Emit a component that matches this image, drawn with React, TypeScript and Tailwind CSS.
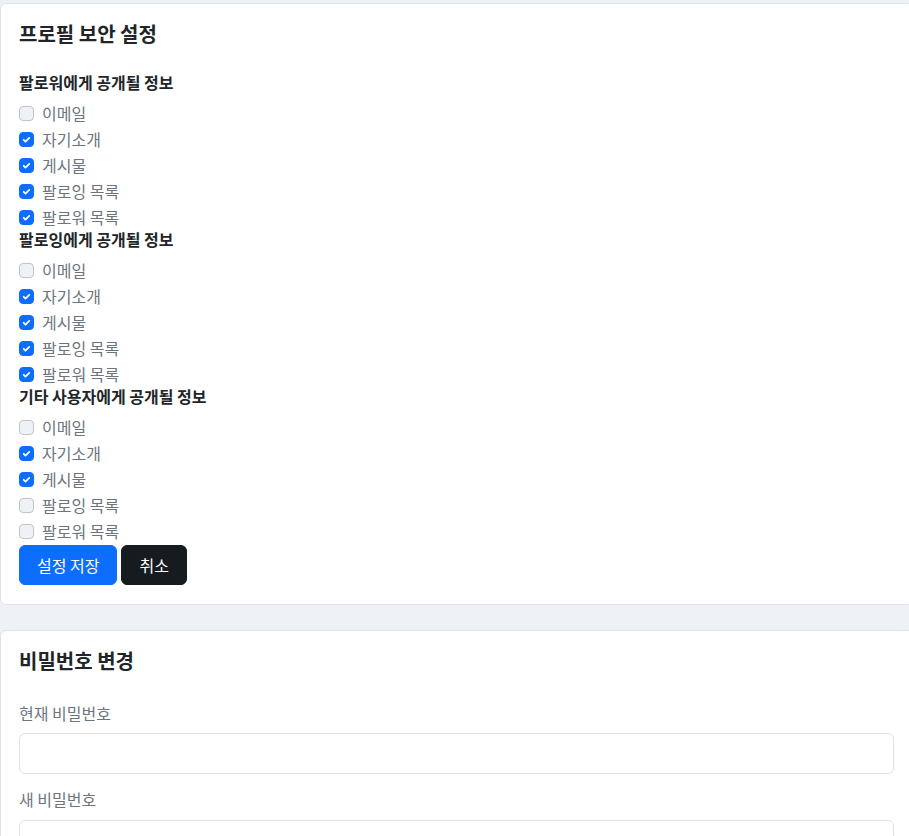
import React from "react";

type Item = { label: string; checked: boolean };

const groups: { title: string; items: Item[] }[] = [
  {
    title: "팔로워에게 공개될 정보",
    items: [
      { label: "이메일", checked: false },
      { label: "자기소개", checked: true },
      { label: "게시물", checked: true },
      { label: "팔로잉 목록", checked: true },
      { label: "팔로워 목록", checked: true },
    ],
  },
  {
    title: "팔로잉에게 공개될 정보",
    items: [
      { label: "이메일", checked: false },
      { label: "자기소개", checked: true },
      { label: "게시물", checked: true },
      { label: "팔로잉 목록", checked: true },
      { label: "팔로워 목록", checked: true },
    ],
  },
  {
    title: "기타 사용자에게 공개될 정보",
    items: [
      { label: "이메일", checked: false },
      { label: "자기소개", checked: true },
      { label: "게시물", checked: true },
      { label: "팔로잉 목록", checked: false },
      { label: "팔로워 목록", checked: false },
    ],
  },
];

function Check({ checked }: { checked: boolean }) {
  if (checked) {
    return (
      <span className="flex h-[15px] w-[15px] shrink-0 items-center justify-center rounded-[4px] border border-[#0d6efd] bg-[#0d6efd]">
        <svg width="11" height="11" viewBox="0 0 20 20" fill="none">
          <path d="m5 10.5 3.2 3.2L15 7" stroke="#fff" strokeWidth="3.2" strokeLinecap="round" strokeLinejoin="round" />
        </svg>
      </span>
    );
  }
  return <span className="h-[15px] w-[15px] shrink-0 rounded-[4px] border border-[#bfc4ca] bg-[#eef1f5]" />;
}

export default function App() {
  return (
    <div
      className="w-[909px] overflow-hidden bg-[#eef1f5] pt-[3px] pb-[40px]"
      style={{ fontFamily: '"Noto Sans CJK KR", "Noto Sans", sans-serif' }}
    >
      <div className="w-[913px] rounded-[6px] border border-[#dfe3e8] bg-white px-[18px] pt-[15px] pb-[19px]">
        <h2 className="mb-[25px] text-[20px] font-bold leading-[30px] text-[#212529]">프로필 보안 설정</h2>
        {groups.map((g) => (
          <div key={g.title}>
            <div className="mb-[11px] h-[16px] text-[16px] font-bold leading-[16px] text-[#212529]">{g.title}</div>
            {g.items.map((it) => (
              <label key={it.label} className="mb-[2px] flex h-[24px] items-center gap-[8px]">
                <Check checked={it.checked} />
                <span className="text-[16px] leading-[24px] text-[#6c757d]">{it.label}</span>
              </label>
            ))}
          </div>
        ))}
        <div className="mt-[2px] flex gap-[4px]">
          <button className="h-[40px] rounded-[6px] border border-[#0d6efd] bg-[#0d6efd] px-[17px] text-[16px] text-white">
            설정 저장
          </button>
          <button className="h-[40px] rounded-[6px] border border-[#161b1f] bg-[#161b1f] px-[17px] text-[16px] text-white">
            취소
          </button>
        </div>
      </div>

      <div className="mt-[25px] w-[913px] rounded-[6px] border border-[#dfe3e8] bg-white px-[18px] pt-[15px] pb-[19px]">
        <h2 className="mb-[26px] text-[20px] font-bold leading-[30px] text-[#212529]">비밀번호 변경</h2>
        <div className="mb-[9px] text-[16px] leading-[22px] text-[#6c757d]">현재 비밀번호</div>
        <input type="password" className="block h-[41px] w-[875px] rounded-[6px] border border-[#dee2e6] bg-white" />
        <div className="mt-[14px] mb-[10px] text-[16px] leading-[22px] text-[#6c757d]">새 비밀번호</div>
        <input type="password" className="block h-[41px] w-[875px] rounded-[6px] border border-[#dee2e6] bg-white" />
      </div>
    </div>
  );
}
